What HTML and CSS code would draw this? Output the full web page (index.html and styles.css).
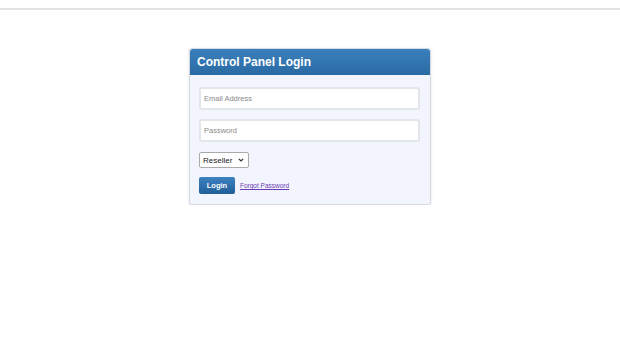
FILE: index.html
```html
<!DOCTYPE html>
<html>
  <head>
    <title>Control Panel Login</title>
    <meta name="viewport" content="width=device-width, initial-scale=1.0">
    <link rel="stylesheet" href="styles.css">
  </head>
  <body>
    <div class="topbar"></div>

    <div class="login-box">
      <div class="login-head">Control Panel Login</div>
      <form class="login-form">
        <input type="text" class="field" placeholder="Email Address">
        <input type="password" class="field" placeholder="Password">
        <span class="role-wrap">
          <select class="role">
            <option>Reseller</option>
            <option>Customer</option>
          </select>
          <svg class="caret" width="6" height="4" viewBox="0 0 6 4">
            <path d="M0.8 0.8 L3 3 L5.2 0.8" fill="none" stroke="#333" stroke-width="1.2"/>
          </svg>
        </span>
        <div class="actions">
          <button type="submit">Login</button>
          <a href="#">Forgot Password</a>
        </div>
      </form>
    </div>
  </body>
</html>
```

FILE: styles.css
```css
/* page */
body {
  font-family: "Liberation Sans", Arial, sans-serif;
  background-color: #fff;
  margin: 0;
}

.topbar {
  height: 8px;
  border-bottom: 2px solid #e2e2e2;
}

.login-box {
  width: 240px;
  margin: 38px auto 0;
  border: 1px solid #d6d9e0;
  border-radius: 3px;
  background-color: #f2f5fd;
  box-shadow: 0 1px 3px rgba(0, 0, 0, 0.12);
}

.login-head {
  background: linear-gradient(#3a80bd, #2a6aa3);
  color: #fff;
  font-size: 12px;
  font-weight: bold;
  height: 26px;
  line-height: 26px;
  padding: 0 7px;
  border-radius: 3px 3px 0 0;
}

.login-form {
  padding: 12px 10px 10px 9px;
  display: flex;
  flex-direction: column;
  align-items: flex-start;
}

.field {
  box-sizing: border-box;
  width: 221px;
  height: 23px;
  margin: 0 0 9px;
  padding: 0 3px;
  border: 2px solid #e3e5eb;
  border-radius: 3px;
  background-color: #fff;
  font-family: "Liberation Sans", Arial, sans-serif;
  font-size: 7.5px;
  outline: none;
}

.field::placeholder {
  color: #8a8a8a;
}

.role-wrap {
  position: relative;
  margin: 1px 0 9px;
}

.role {
  display: block;
  box-sizing: border-box;
  height: 16px;
  width: 50px;
  padding: 0 0 0 3px;
  font-family: "Liberation Sans", Arial, sans-serif;
  font-size: 8px;
  color: #222;
  border: 1px solid #aaa;
  border-radius: 2px;
  background-color: #fff;
  appearance: none;
  -webkit-appearance: none;
}

.caret {
  position: absolute;
  right: 5px;
  top: 6px;
  pointer-events: none;
}

.actions {
  display: flex;
  align-items: center;
  gap: 5px;
}

.actions button {
  width: 36px;
  height: 17px;
  padding: 0;
  border: none;
  border-radius: 2px;
  background: linear-gradient(#3d82c0, #1f5f99);
  color: #fff;
  font-family: "Liberation Sans", Arial, sans-serif;
  font-size: 7.5px;
  font-weight: bold;
  cursor: pointer;
}

.actions a {
  color: #6a3bb5;
  font-size: 6.5px;
  text-decoration: underline;
}
```
